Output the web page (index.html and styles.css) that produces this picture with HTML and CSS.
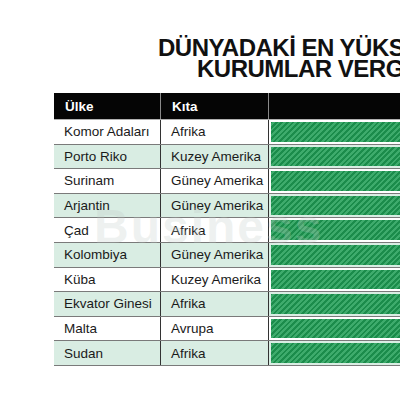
FILE: index.html
```html
<!DOCTYPE html>
<html lang="tr">
<head>
    <meta charset="UTF-8">
    <title>Dünyadaki en yüksek kurumlar vergisi</title>
    <link rel="stylesheet" href="styles.css">
</head>
<body>
    <div class="chart">
        <h1 class="title">
            <span class="line-one">DÜNYADAKİ EN YÜKSEK</span>
            <span class="line-two">KURUMLAR VERGİSİ</span>
        </h1>
        <div class="tax-table">
            <div class="row head">
                <div class="cell">Ülke</div>
                <div class="cell">Kıta</div>
                <div class="cell bar-cell"></div>
            </div>
            <div class="row"><div class="cell">Komor Adaları</div><div class="cell">Afrika</div><div class="cell bar-cell"><div class="bar"></div></div></div>
            <div class="row alt"><div class="cell">Porto Riko</div><div class="cell">Kuzey Amerika</div><div class="cell bar-cell"><div class="bar"></div></div></div>
            <div class="row"><div class="cell">Surinam</div><div class="cell">Güney Amerika</div><div class="cell bar-cell"><div class="bar"></div></div></div>
            <div class="row alt"><div class="cell">Arjantin</div><div class="cell">Güney Amerika</div><div class="cell bar-cell"><div class="bar"></div></div></div>
            <div class="row"><div class="cell">Çad</div><div class="cell">Afrika</div><div class="cell bar-cell"><div class="bar"></div></div></div>
            <div class="row alt"><div class="cell">Kolombiya</div><div class="cell">Güney Amerika</div><div class="cell bar-cell"><div class="bar"></div></div></div>
            <div class="row"><div class="cell">Küba</div><div class="cell">Kuzey Amerika</div><div class="cell bar-cell"><div class="bar"></div></div></div>
            <div class="row alt"><div class="cell">Ekvator Ginesi</div><div class="cell">Afrika</div><div class="cell bar-cell"><div class="bar"></div></div></div>
            <div class="row"><div class="cell">Malta</div><div class="cell">Avrupa</div><div class="cell bar-cell"><div class="bar"></div></div></div>
            <div class="row alt"><div class="cell">Sudan</div><div class="cell">Afrika</div><div class="cell bar-cell"><div class="bar"></div></div></div>
            <!-- faint logo stamped over the table -->
            <div class="watermark">Business</div>
        </div>
    </div>
</body>
</html>
```

FILE: styles.css
```css
body {
    margin: 0;
    background: #ffffff;
    font-family: 'Liberation Sans', Arial, sans-serif;
    color: #1a1a1a;
    overflow: hidden;
}

.chart {
    width: 600px;
    padding: 37px 0 0 54px;
}

.title {
    margin: 0;
    font-size: 24px;
    line-height: 21px;
    font-weight: bold;
    letter-spacing: -0.5px;
    color: #111;
}

.title span {
    display: block;
    white-space: nowrap;
}

.line-one {
    padding-left: 104px;
}

.line-two {
    padding-left: 143px;
}

.tax-table {
    position: relative;
    margin-top: 14px;
    font-size: 13.5px;
}

.row {
    display: grid;
    grid-template-columns: 107px 108px 1fr;
    height: 24.6px;
    box-sizing: border-box;
    border-bottom: 1px solid #7a7a7a;
}

.row.alt {
    background: #d9ede3;
}

.cell {
    display: flex;
    align-items: center;
    padding-left: 10px;
    border-right: 1px solid #333;
    white-space: nowrap;
}

.row.head {
    height: 27px;
    background: #050505;
    color: #fff;
    font-weight: bold;
    border-bottom: 1px solid #b0b0b0;
}

.row.head .cell {
    padding-left: 11px;
    border-right-color: #8a8a8a;
}

.cell.bar-cell {
    display: block;
    padding: 2px 0 2px 2px;
    border-right: none;
}

.bar {
    height: 100%;
    background: repeating-linear-gradient(
        -45deg,
        #1b8c4b 0,
        #1b8c4b 2px,
        #3eab6c 2px,
        #3eab6c 4px
    );
}

.watermark {
    position: absolute;
    left: 40px;
    top: 106px;
    font-size: 48px;
    font-weight: bold;
    letter-spacing: 2px;
    color: rgba(190, 200, 195, 0.25);
    pointer-events: none;
}
```
